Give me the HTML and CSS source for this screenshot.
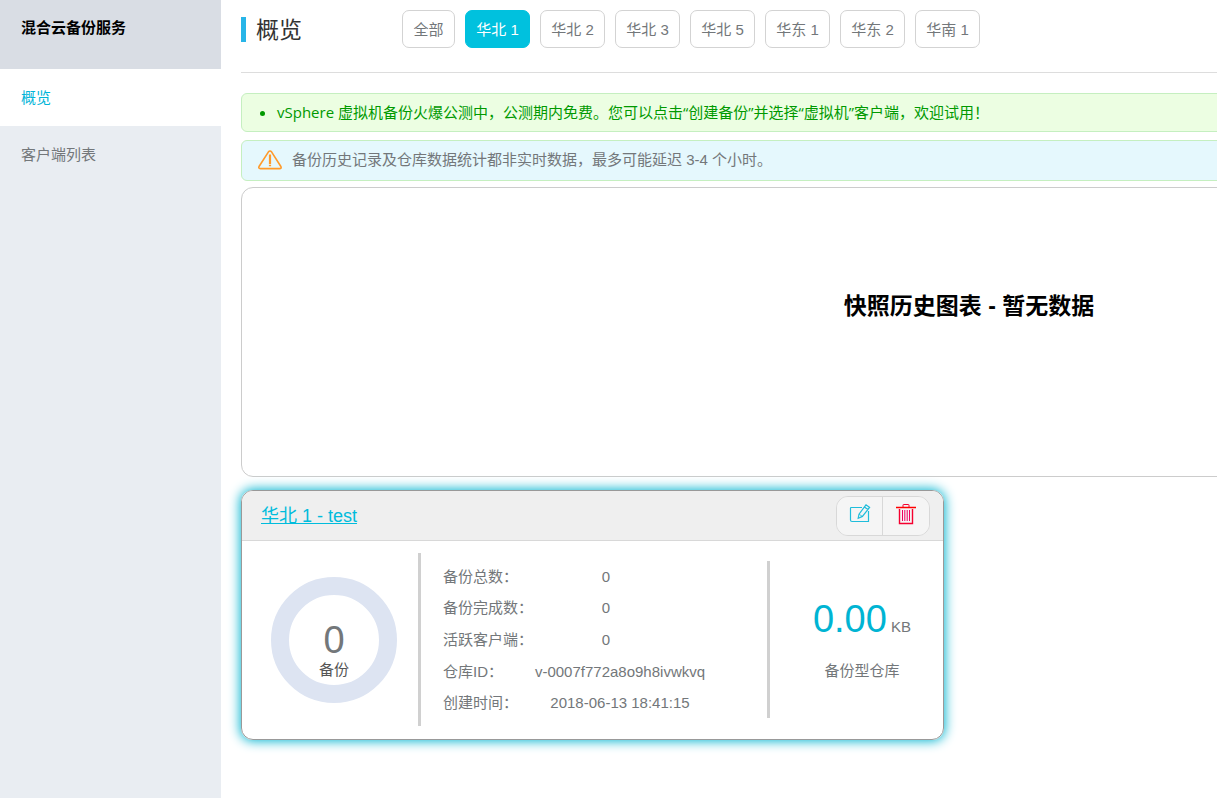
FILE: index.html
```html
<!DOCTYPE html>
<html lang="zh-CN">
<head>
<meta charset="utf-8">
<title>混合云备份服务</title>
<link rel="stylesheet" href="styles.css">
</head>
<body>
<div class="app">
  <aside class="sidebar">
    <div class="sidebar-title">混合云备份服务</div>
    <nav class="menu">
      <a class="menu-item active" href="#">概览</a>
      <a class="menu-item" href="#">客户端列表</a>
    </nav>
  </aside>
  <main class="main">
    <header class="page-head">
      <h1 class="page-title">概览</h1>
      <div class="regions">
        <button class="region region-short" type="button">全部</button>
        <button class="region active" type="button">华北 1</button>
        <button class="region" type="button">华北 2</button>
        <button class="region" type="button">华北 3</button>
        <button class="region" type="button">华北 5</button>
        <button class="region" type="button">华东 1</button>
        <button class="region" type="button">华东 2</button>
        <button class="region" type="button">华南 1</button>
      </div>
    </header>
    <ul class="alert alert-success">
      <li>vSphere 虚拟机备份火爆公测中，公测期内免费。您可以点击“创建备份”并选择“虚拟机”客户端，欢迎试用！</li>
    </ul>
    <div class="alert alert-info">
      <svg class="warn-icon" width="24" height="20" viewBox="0 0 24 20" fill="none" stroke="#ff9a2a" stroke-width="1.6" stroke-linejoin="round" stroke-linecap="round"><path d="M10.3 2.1 1.2 16.2Q0 18.6 2.4 18.6H21.4Q24 18.6 22.7 16.2L13.7 2.1Q12 0 10.3 2.1Z"/><path d="M12 4.5V14M12 14.8V16.2" stroke-width="2.2" stroke-linecap="butt"/></svg>
      <span>备份历史记录及仓库数据统计都非实时数据，最多可能延迟 3-4 个小时。</span>
    </div>
    <section class="chart">
      <h2 class="chart-title">快照历史图表 - 暂无数据</h2>
    </section>
    <section class="card">
      <div class="card-head">
        <a class="card-link" href="#">华北 1 - test</a>
        <div class="tools">
          <button class="tool" type="button" aria-label="编辑">
            <svg width="22" height="22" viewBox="0 0 22 22" fill="none" stroke="#20bddb" stroke-width="1.2"><path d="M13 4.5H2.2Q1.5 4.5 1.5 5.2V17Q1.5 18.5 3 18.5H19.5V8"/><path d="M9.2 15.2 10 11.2 17 1.8 20.6 4.4 13.4 13.4ZM15.4 4 19 6.6"/><path d="M10 11.2 13.4 13.4" stroke-width="0.8"/></svg>
          </button>
          <button class="tool" type="button" aria-label="删除">
            <svg width="20" height="22" viewBox="0 0 20 22" fill="none" stroke="#f5002f" stroke-width="1"><path d="M0 4.5H20" stroke="#f00" stroke-width="1.4"/><path d="M7 4V2Q7 1.5 7.5 1.5H12.5Q13 1.5 13 2V4"/><path d="M3.5 6V20.5H16.5V6" stroke-width="1.4"/><path d="M6.5 7V18M8.8 7V18M11.2 7V18M13.5 7V18" stroke="#f00060"/></svg>
          </button>
        </div>
      </div>
      <div class="card-body">
        <div class="donut">
          <svg width="126" height="126" viewBox="0 0 126 126"><circle cx="63" cy="63" r="54" fill="none" stroke="#dde4f2" stroke-width="18"/></svg>
          <div class="donut-text">
            <span class="donut-number">0</span>
            <span class="donut-label">备份</span>
          </div>
        </div>
        <dl class="info">
          <div class="info-row"><dt>备份总数：</dt><dd>0</dd></div>
          <div class="info-row"><dt>备份完成数：</dt><dd>0</dd></div>
          <div class="info-row"><dt>活跃客户端：</dt><dd>0</dd></div>
          <div class="info-row wide"><dt>仓库ID：</dt><dd>v-0007f772a8o9h8ivwkvq</dd></div>
          <div class="info-row wide"><dt>创建时间：</dt><dd>2018-06-13 18:41:15</dd></div>
        </dl>
        <div class="storage">
          <div class="storage-size"><span class="storage-number">0.00</span> KB</div>
          <div class="storage-label">备份型仓库</div>
        </div>
      </div>
    </section>
  </main>
</div>
</body>
</html>
```
FILE: styles.css
```css
* {
  box-sizing: border-box;
}

body {
  margin: 0;
  background: #fff;
  color: #73777a;
  font: 15px/20px "Liberation Sans", "Noto Sans CJK SC", sans-serif;
}

button {
  font: inherit;
  cursor: pointer;
}

.app {
  display: flex;
  min-height: 100vh;
  overflow: hidden;
}

.sidebar {
  flex: 0 0 221px;
  background: #e9edf2;
}

.sidebar-title {
  height: 69px;
  padding: 18px 21px;
  background: #d9dde4;
  color: #000;
  font-weight: bold;
}

.menu {
  display: flex;
  flex-direction: column;
}

.menu-item {
  padding: 19px 21px 18px;
  color: inherit;
  text-decoration: none;
}

.menu-item.active {
  background: #fff;
  color: #00b4d8;
}

.main {
  flex: 1 0 auto;
  min-width: 1496px;
  padding: 0 20px;
}

.page-head {
  display: flex;
  align-items: flex-start;
  gap: 100px;
  height: 73px;
  padding-top: 10px;
  border-bottom: 1px solid #ddd;
}

.page-title {
  height: 25px;
  margin: 7px 0 0;
  padding-left: 10px;
  border-left: 5px solid #28b5e8;
  color: #333;
  font-size: 23px;
  font-weight: normal;
  line-height: 27px;
}

.regions {
  display: flex;
  gap: 10px;
}

.region {
  min-width: 65px;
  height: 38px;
  padding: 1px 10px 0;
  border: 1px solid #d3d3d3;
  border-radius: 7px;
  background: #fff;
  color: inherit;
}

.region-short {
  min-width: 53px;
}

.region.active {
  border-color: #00c1de;
  background: #00c1de;
  color: #fff;
}

.alert {
  margin: 20px 0 8px;
  border: 1px solid #c5efc0;
  border-radius: 6px;
}

.alert-success {
  padding: 8px 35px;
  background: #ecfee2;
  color: #090;
  font-family: "Open Sans", "Noto Sans CJK SC", sans-serif;
  line-height: 21px;
}

.alert-info {
  display: flex;
  align-items: center;
  gap: 10px;
  height: 41px;
  margin: 0 0 6px;
  padding: 0 16px 2px;
  background: #e5f8fd;
}

.chart {
  height: 290px;
  padding-top: 103px;
  border: 1px solid #ccc;
  border-radius: 12px;
  text-align: center;
}

.chart-title {
  margin: 0;
  color: #000;
  font-size: 23px;
  line-height: 30px;
}

.card {
  width: 703px;
  margin-top: 13px;
  border: 1px solid #999;
  border-radius: 12px;
  box-shadow: 0 0 12px 1px #00b4d0;
}

.card-head {
  display: flex;
  align-items: center;
  justify-content: space-between;
  height: 50px;
  padding: 0 13px 0 19px;
  border-bottom: 1px solid #d8d8d8;
  border-radius: 11px 11px 0 0;
  background: #efefef;
}

.card-link {
  color: #00bcdc;
  font-size: 18px;
}

.tools {
  display: flex;
  height: 40px;
  border: 1px solid #d8d8d8;
  border-radius: 12px;
  overflow: hidden;
}

.tool {
  display: grid;
  place-items: center;
  width: 45px;
  padding: 0 0 3px;
  border: 0;
  background: #f5f5f5;
}

.tool + .tool {
  width: 47px;
  border-left: 1px solid #d8d8d8;
}

.card-body {
  display: flex;
  height: 198px;
}

.donut {
  display: grid;
  place-items: center;
  flex: 0 0 179px;
  height: 173px;
  margin-top: 12px;
  padding-left: 8px;
  border-right: 3px solid #d0d0d0;
}

.donut > * {
  grid-area: 1 / 1;
}

.donut svg {
  display: block;
}

.donut-text {
  display: flex;
  flex-direction: column;
  align-items: center;
  padding-top: 20px;
}

.donut-number,
.storage-number {
  font-size: 38px;
  line-height: 40px;
}

.donut-label {
  color: #555;
}

.info {
  display: flex;
  flex: 1;
  flex-direction: column;
  height: 158px;
  margin: 20px 0 0;
  padding: 0 60px 0 22px;
}

.info-row {
  display: flex;
  flex: 1;
  align-items: center;
}

.info-row dt {
  flex: 0 0 90px;
  white-space: nowrap;
}

.info-row dd {
  flex: 0 0 146px;
  margin: 0;
  text-align: center;
}

.info-row.wide dd {
  flex-basis: 174px;
}

.storage {
  flex: 0 0 176px;
  height: 157px;
  margin-top: 20px;
  padding: 38px 0 0 11px;
  border-left: 3px solid #d0d0d0;
  text-align: center;
}

.storage-number {
  color: #00b4d3;
}

.storage-label {
  margin-top: 22px;
}
```
